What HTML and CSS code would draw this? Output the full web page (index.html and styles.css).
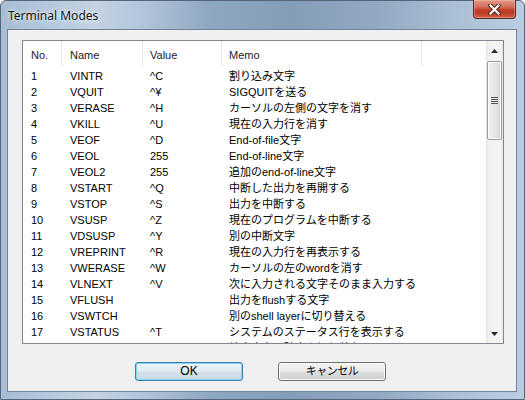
FILE: index.html
```html
<!DOCTYPE html>
<html lang="ja">
<head>
<meta charset="utf-8">
<title>Terminal Modes</title>
<link rel="stylesheet" href="styles.css">
</head>
<body>
<div class="window">
  <div class="titlebar">
    <span class="title">Terminal Modes</span>
    <div class="close">
      <svg width="13" height="11" viewBox="0 0 13 11">
        <path d="M2.5 1.5 L10.5 9.5 M10.5 1.5 L2.5 9.5" stroke="#4a2018" stroke-width="4.2" stroke-linecap="square" fill="none"/>
        <path d="M2.5 1.5 L10.5 9.5 M10.5 1.5 L2.5 9.5" stroke="#ffffff" stroke-width="2.2" stroke-linecap="square" fill="none"/>
      </svg>
    </div>
  </div>
  <div class="client">
    <div class="listbox">
      <div class="table">
        <div class="row head">
          <span>No.</span><span>Name</span><span>Value</span><span>Memo</span><span></span>
        </div>
        <div class="row"><span>1</span><span>VINTR</span><span>^C</span><span>割り込み文字</span><span></span></div>
        <div class="row"><span>2</span><span>VQUIT</span><span>^¥</span><span>SIGQUITを送る</span><span></span></div>
        <div class="row"><span>3</span><span>VERASE</span><span>^H</span><span>カーソルの左側の文字を消す</span><span></span></div>
        <div class="row"><span>4</span><span>VKILL</span><span>^U</span><span>現在の入力行を消す</span><span></span></div>
        <div class="row"><span>5</span><span>VEOF</span><span>^D</span><span>End-of-file文字</span><span></span></div>
        <div class="row"><span>6</span><span>VEOL</span><span>255</span><span>End-of-line文字</span><span></span></div>
        <div class="row"><span>7</span><span>VEOL2</span><span>255</span><span>追加のend-of-line文字</span><span></span></div>
        <div class="row"><span>8</span><span>VSTART</span><span>^Q</span><span>中断した出力を再開する</span><span></span></div>
        <div class="row"><span>9</span><span>VSTOP</span><span>^S</span><span>出力を中断する</span><span></span></div>
        <div class="row"><span>10</span><span>VSUSP</span><span>^Z</span><span>現在のプログラムを中断する</span><span></span></div>
        <div class="row"><span>11</span><span>VDSUSP</span><span>^Y</span><span>別の中断文字</span><span></span></div>
        <div class="row"><span>12</span><span>VREPRINT</span><span>^R</span><span>現在の入力行を再表示する</span><span></span></div>
        <div class="row"><span>13</span><span>VWERASE</span><span>^W</span><span>カーソルの左のwordを消す</span><span></span></div>
        <div class="row"><span>14</span><span>VLNEXT</span><span>^V</span><span>次に入力される文字そのまま入力する</span><span></span></div>
        <div class="row"><span>15</span><span>VFLUSH</span><span></span><span>出力をflushする文字</span><span></span></div>
        <div class="row"><span>16</span><span>VSWTCH</span><span></span><span>別のshell layerに切り替える</span><span></span></div>
        <div class="row"><span>17</span><span>VSTATUS</span><span>^T</span><span>システムのステータス行を表示する</span><span></span></div>
        <div class="row"><span>18</span><span>VDISCARD</span><span>^O</span><span>端末出力の破棄を切り替える</span><span></span></div>
      </div>
      <div class="scrollbar">
        <div class="arrow">
          <svg width="7" height="4" viewBox="0 0 7 4"><path d="M0 4 L3.5 0 L7 4 Z" fill="#2a2a2a"/></svg>
        </div>
        <div class="thumb">
          <svg width="7" height="7" viewBox="0 0 7 7">
            <path d="M0 0.5 H7 M0 2.5 H7 M0 4.5 H7 M0 6.5 H7" stroke="#555" stroke-width="1"/>
          </svg>
        </div>
        <div class="track"></div>
        <div class="arrow">
          <svg width="7" height="4" viewBox="0 0 7 4"><path d="M0 0 L3.5 4 L7 0 Z" fill="#2a2a2a"/></svg>
        </div>
      </div>
    </div>
    <div class="buttons">
      <button class="btn default">OK</button>
      <button class="btn">キャンセル</button>
    </div>
  </div>
</div>
</body>
</html>
```

FILE: styles.css
```css
html, body {
  margin: 0;
  padding: 0;
}
body {
  width: 525px;
  height: 400px;
  overflow: hidden;
  background: #ffffff;
  font-family: "Liberation Sans", "Noto Sans CJK JP", sans-serif;
}
.window {
  width: 525px;
  height: 400px;
  box-sizing: border-box;
  display: flex;
  flex-direction: column;
  border: 1px solid #55657a;
  border-radius: 6px 6px 0 0;
  background: linear-gradient(to right, #a7bdd4 0%, #c3d3e3 18%, #b5c7db 26%, #8ea7c1 40%, #839cb8 55%, #92a9c3 72%, #adc1d6 88%, #bacce0 100%);
}
.titlebar {
  height: 28px;
  display: flex;
  align-items: flex-start;
  flex-shrink: 0;
}
.title {
  font-family: "Noto Sans", sans-serif;
  font-size: 12px;
  color: #151515;
  margin: 6px 0 0 7px;
  text-shadow: 0 0 6px rgba(255, 255, 255, 0.85), 0 0 3px rgba(255, 255, 255, 0.7);
}
.close {
  margin-left: auto;
  margin-right: 8px;
  margin-top: -1px;
  width: 43px;
  height: 19px;
  box-sizing: border-box;
  border: 1px solid #5a2a22;
  border-top: none;
  border-radius: 0 0 4px 4px;
  background: linear-gradient(to bottom, #e39a89 0%, #d27460 35%, #c2402a 55%, #bd3a24 70%, #cf6247 100%);
  box-shadow: inset 0 0 0 1px rgba(255, 200, 190, 0.4);
  display: flex;
  align-items: center;
  justify-content: center;
}
.client {
  flex: 1;
  margin: 0 7px 7px 6px;
  background: #f0f0f0;
  border: 1px solid #71849a;
  display: flex;
  flex-direction: column;
  padding: 10px 0 0 14px;
}
.listbox {
  width: 482px;
  height: 304px;
  box-sizing: border-box;
  border: 1px solid #828790;
  background: #ffffff;
  display: flex;
  overflow: hidden;
}
.table {
  flex: 1;
  overflow: hidden;
}
.row {
  display: grid;
  grid-template-columns: 39px 81px 79px 200px 1fr;
  height: 16px;
  line-height: 16px;
  font-size: 11px;
  color: #000000;
  white-space: nowrap;
}
.row span {
  padding-left: 8px;
  overflow: hidden;
}
.row span:nth-child(3),
.row span:nth-child(4) {
  padding-left: 7px;
}
.row.head {
  height: 27px;
  line-height: 28px;
  color: #1c1c1c;
}
.row.head span {
  border-right: 1px solid #e4e6ea;
  box-sizing: border-box;
  height: 25px;
}
.row.head span:last-child {
  border-right: none;
}
.scrollbar {
  width: 17px;
  flex-shrink: 0;
  display: flex;
  flex-direction: column;
  background: linear-gradient(to right, #e3e3e3 0%, #f1f1f1 15%, #f4f4f4 85%, #e9e9e9 100%);
}
.arrow {
  height: 19px;
  display: flex;
  align-items: center;
  justify-content: center;
  flex-shrink: 0;
}
.thumb {
  height: 79px;
  margin: 1px 1px 0 1px;
  box-sizing: border-box;
  border: 1px solid #9b9b9b;
  border-radius: 2px;
  background: linear-gradient(to right, #f2f2f2 0%, #e6e6e6 50%, #d6d6d6 100%);
  box-shadow: inset 0 0 0 1px #fbfbfb;
  display: flex;
  align-items: center;
  justify-content: center;
  flex-shrink: 0;
}
.track {
  flex: 1;
}
.buttons {
  display: flex;
  justify-content: center;
  gap: 35px;
  margin-top: 18px;
  padding-right: 17px;
}
.btn {
  width: 108px;
  height: 19px;
  box-sizing: border-box;
  border: 1px solid #707070;
  border-radius: 3px;
  background: linear-gradient(to bottom, #f2f2f2 0%, #ebebeb 48%, #dddddd 52%, #cfcfcf 100%);
  box-shadow: inset 0 0 0 1px #fbfbfb;
  font-family: "Liberation Sans", "Noto Sans CJK JP", sans-serif;
  font-size: 11px;
  line-height: 15px;
  color: #000000;
  padding: 0;
  letter-spacing: -0.5px;
}
.btn.default {
  border-color: #3c7fb1;
  background: linear-gradient(to bottom, #eef3f8 0%, #e3ebf2 48%, #d6e2ec 52%, #c9d8e5 100%);
  box-shadow: inset 0 0 0 1px #7fd3f5;
  font-size: 12px;
  letter-spacing: 0;
}
```
